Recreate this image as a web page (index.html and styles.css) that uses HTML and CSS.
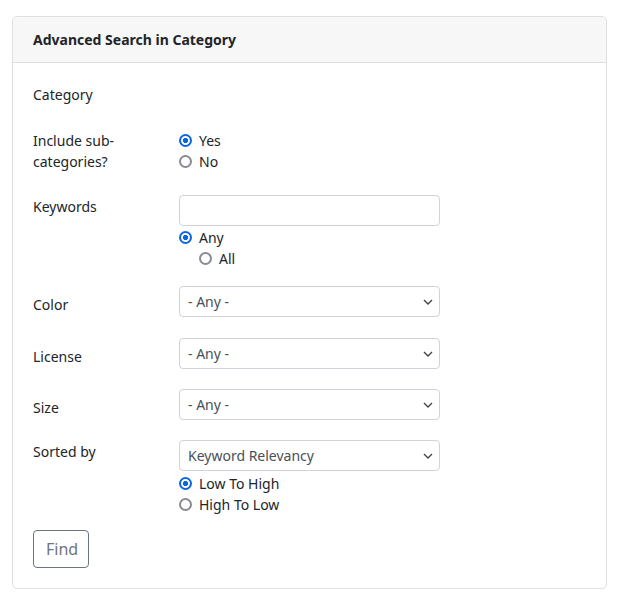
FILE: index.html
```html
<!DOCTYPE html>
<html lang="en">
<head>
<meta charset="utf-8">
<title>Advanced Search in Category</title>
<link rel="stylesheet" href="styles.css">
</head>
<body>
<div class="card">
  <div class="card-header">Advanced Search in Category</div>
  <form class="card-body">
    <div class="row row-category">
      <label class="label">Category</label>
      <div class="control"></div>
    </div>
    <div class="row row-include">
      <label class="label label-top">Include sub-categories?</label>
      <div class="control">
        <label class="check"><input type="radio" name="sub" checked><span>Yes</span></label>
        <label class="check"><input type="radio" name="sub"><span>No</span></label>
      </div>
    </div>
    <div class="row row-keywords">
      <label class="label label-field">Keywords</label>
      <div class="control">
        <input class="field" type="text">
        <label class="check check-after-input"><input type="radio" name="kw" checked><span>Any</span></label>
        <label class="check check-indent"><input type="radio" name="kw"><span>All</span></label>
      </div>
    </div>
    <div class="row row-select row-select-first">
      <label class="label label-mid">Color</label>
      <div class="control"><select class="field select"><option>- Any -</option></select></div>
    </div>
    <div class="row row-select">
      <label class="label label-mid">License</label>
      <div class="control"><select class="field select"><option>- Any -</option></select></div>
    </div>
    <div class="row row-select">
      <label class="label label-mid">Size</label>
      <div class="control"><select class="field select"><option>- Any -</option></select></div>
    </div>
    <div class="row row-sorted">
      <label class="label label-field">Sorted by</label>
      <div class="control">
        <select class="field select"><option>Keyword Relevancy</option></select>
        <label class="check check-after-select"><input type="radio" name="ord" checked><span>Low To High</span></label>
        <label class="check"><input type="radio" name="ord"><span>High To Low</span></label>
      </div>
    </div>
    <div class="actions">
      <button type="button" class="btn">Find</button>
    </div>
  </form>
</div>
</body>
</html>
```
FILE: styles.css
```css
* { box-sizing: border-box; }

html, body { background: #ffffff; }

body {
  margin: 0;
  padding: 16px 17px 15px 12px;
  font-family: "Noto Sans", "Open Sans", sans-serif;
  font-size: 14px;
  line-height: 21px;
  color: #212529;
}

.card {
  border: 1px solid #dfdfdf;
  border-radius: 5px;
  background: #fff;
}

.card-header {
  background: #f7f7f7;
  border-bottom: 1px solid #dfdfdf;
  border-radius: 5px 5px 0 0;
  padding: 12px 20px 12px 20px;
  font-weight: 700;
  height: 46px;
  line-height: 22px;
}

.card-body {
  display: flex;
  flex-direction: column;
  padding: 21px 20px 20px 20px;
  margin: 0;
}

.row {
  display: flex;
  align-items: flex-start;
}

.label {
  flex: 0 0 146px;
  padding-right: 14px;
}

.label-field { padding-top: 1px; }
.label-mid { padding-top: 8px; }

.control {
  display: flex;
  flex-direction: column;
  align-items: flex-start;
}

.row-category { margin-bottom: 25px; }
.row-include { margin-bottom: 23px; }
.row-keywords { margin-bottom: 17px; }
.row-select { margin-bottom: 20px; }
.row-select-first { margin-bottom: 21px; }
.row-sorted { margin-bottom: 15px; }

.check {
  display: flex;
  align-items: center;
  height: 21px;
  cursor: pointer;
}

.check input {
  appearance: none;
  -webkit-appearance: none;
  flex: 0 0 13px;
  width: 13px;
  height: 13px;
  margin: 0 7px 0 0;
  border: 2px solid #8a8a95;
  border-radius: 50%;
  background: #fff;
}

.check input:checked {
  border-color: #0d66e0;
  background: radial-gradient(circle, #0d66e0 0 2.4px, #fff 2.9px);
}

.check-after-input { margin-top: 1px; }
.check-after-select { margin-top: 2px; }
.check-indent { margin-left: 20px; }

.field {
  width: 261px;
  height: 31px;
  border: 1px solid #ced4da;
  border-radius: 4px;
  background: #fff;
  font-family: inherit;
  font-size: 14px;
  color: #495057;
  padding: 0 8px;
  margin: 0;
}

.select {
  appearance: none;
  -webkit-appearance: none;
  padding-right: 28px;
  background-image: url("data:image/svg+xml,%3Csvg xmlns='http://www.w3.org/2000/svg' viewBox='0 0 10 6' width='10' height='6'%3E%3Cpath d='M1 1l4 4 4-4' fill='none' stroke='%23444' stroke-width='1.4'/%3E%3C/svg%3E");
  background-repeat: no-repeat;
  background-position: right 6px center;
  background-size: 10px 6px;
}

.actions { display: flex; }

.btn {
  font-family: inherit;
  font-size: 16px;
  line-height: 24px;
  color: #6c757d;
  background: #fff;
  border: 1px solid #6c757d;
  border-radius: 4px;
  padding: 6px 12px;
  height: 38px;
  width: 56px;
  cursor: pointer;
}
```
